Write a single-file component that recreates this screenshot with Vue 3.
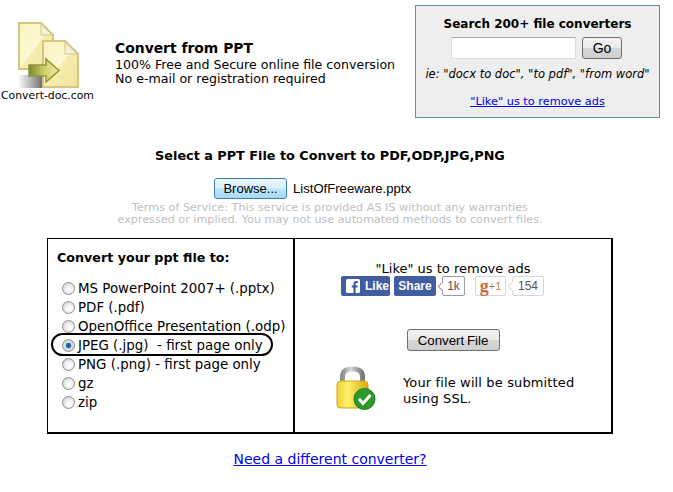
<template>
  <div class="page">
    <div class="top">
      <div class="logo">
        <svg width="62" height="67" viewBox="0 0 62 67">
          <defs>
            <linearGradient id="doc" x1="0" y1="0" x2="1" y2="1">
              <stop offset="0" stop-color="#fbf3bf" />
              <stop offset="0.5" stop-color="#fdf8d2" />
              <stop offset="0.52" stop-color="#f5ecae" />
              <stop offset="1" stop-color="#efe39c" />
            </linearGradient>
            <linearGradient id="shadow" x1="1" y1="0" x2="0" y2="0">
              <stop offset="0" stop-color="#707070" />
              <stop offset="1" stop-color="#ffffff" />
            </linearGradient>
            <linearGradient id="arrow" x1="0" y1="0" x2="1" y2="0">
              <stop offset="0" stop-color="#7c872d" />
              <stop offset="0.5" stop-color="#cdd06a" />
              <stop offset="1" stop-color="#f4eba8" />
            </linearGradient>
          </defs>
          <path d="M0 53 H24 V66 H0 Z" fill="url(#shadow)" />
          <path d="M1 1 H23 L35 13 V47 H1 Z" fill="url(#doc)" stroke="#d4c581" stroke-width="2" />
          <path d="M23 2 V13 H34 Z" fill="#f5f1d6" stroke="#d4c581" />
          <path d="M25 19 H47 L60 32 V65 H25 Z" fill="url(#doc)" stroke="#d4c581" stroke-width="2" />
          <path d="M47 20 V32 H59 Z" fill="#f5f1d6" stroke="#d4c581" />
          <path d="M11 43 H28 V37 L41 48.500 L28 60 V54 H11 Z" fill="url(#arrow)" stroke="#8f9438" stroke-width="1.500" />
        </svg>
        <span>Convert-doc.com</span>
      </div>
      <div class="intro">
        <h1>Convert from PPT</h1>
        <p>100% Free and Secure online file conversion</p>
        <p>No e-mail or registration required</p>
      </div>
      <div class="search">
        <h2>Search 200+ file converters</h2>
        <div class="search-row">
          <input type="text" />
          <button class="btn go" type="button">Go</button>
        </div>
        <p class="hint">ie: "docx to doc", "to pdf", "from word"</p>
        <a class="remove" href="#">"Like" us to remove ads</a>
      </div>
    </div>

    <h2 class="select">Select a PPT File to Convert to PDF,ODP,JPG,PNG</h2>

    <div class="file-row">
      <button class="btn browse" type="button">Browse...</button>
      <span>ListOfFreeware.pptx</span>
    </div>
    <p class="terms">
      Terms of Service: This service is provided AS IS without any warranties<br />
      expressed or implied. You may not use automated methods to convert files.
    </p>

    <div class="panel">
      <div class="left">
        <h3>Convert your ppt file to:</h3>
        <label v-for="opt in options" :key="opt" class="opt">
          <span class="radio" :class="{ on: opt === selected }"></span>
          {{ opt }}
        </label>
        <div class="ring"></div>
      </div>
      <div class="right">
        <div class="like-title">"Like" us to remove ads</div>
        <div class="social">
          <span class="fb like">
            <svg width="14" height="14" viewBox="0 0 14 14">
              <rect width="14" height="14" rx="1.500" fill="#fff" />
              <path d="M9.600 14 V8.600 H11.400 L11.700 6.500 H9.600 V5.200 C9.600 4.500 9.900 4.100 10.700 4.100 H11.800 V2.200 C11.500 2.200 10.900 2.100 10.200 2.100 C8.600 2.100 7.500 3.100 7.500 4.900 V6.500 H5.700 V8.600 H7.500 V14 Z" fill="#3b5998" />
            </svg>
            Like
          </span>
          <span class="fb share">Share</span>
          <span class="count fbc">1k</span>
          <span class="gplus"><b>g</b><i>+1</i></span>
          <span class="count gc">154</span>
        </div>
        <button class="btn convert" type="button">Convert File</button>
        <div class="ssl">
          <svg width="40" height="44" viewBox="0 0 40 44">
            <defs>
              <linearGradient id="shackle" x1="0" y1="0" x2="1" y2="0">
                <stop offset="0" stop-color="#8d8d8d" />
                <stop offset="0.4" stop-color="#d8d8d8" />
                <stop offset="1" stop-color="#777" />
              </linearGradient>
              <linearGradient id="body" x1="0" y1="0" x2="1" y2="0">
                <stop offset="0" stop-color="#f2d335" />
                <stop offset="0.35" stop-color="#fff16a" />
                <stop offset="1" stop-color="#d8a90f" />
              </linearGradient>
            </defs>
            <path d="M6.500 18 V11 C6.500 5 10 3 16.500 3 C23 3 26.500 5 26.500 11 V18" fill="none" stroke="url(#shackle)" stroke-width="5" />
            <rect x="1" y="15" width="31" height="27" rx="4" fill="url(#body)" stroke="#d3a616" />
            <circle cx="28.500" cy="33" r="10.500" fill="#2a9a2a" stroke="#1e7a20" />
            <path d="M23 33 L27 37.500 L34.500 29" fill="none" stroke="#fff" stroke-width="3" />
          </svg>
          <p>Your file will be submitted<br />using SSL.</p>
        </div>
      </div>
    </div>

    <a class="different" href="#">Need a different converter?</a>
  </div>
</template>

<script setup>
const selected = "JPEG (.jpg)\u00a0 - first page only";
const options = [
  "MS PowerPoint 2007+ (.pptx)",
  "PDF (.pdf)",
  "OpenOffice Presentation (.odp)",
  selected,
  "PNG (.png) - first page only",
  "gz",
  "zip",
];
</script>

<style scoped>
.page {
  width: 673px;
  height: 492px;
  overflow: hidden;
  box-sizing: border-box;
  padding-right: 13px;
  background: #fff;
  color: #000;
  font-family: "DejaVu Sans", Verdana, sans-serif;
  font-size: 13px;
  display: flex;
  flex-direction: column;
  align-items: center;
}

.top {
  align-self: stretch;
  display: flex;
  height: 118px;
  flex-shrink: 0;
  padding-top: 5px;
  box-sizing: border-box;
}

.logo {
  width: 115px;
  flex-shrink: 0;
  padding-top: 17px;
  display: flex;
  flex-direction: column;
  font-size: 10.850px;
  line-height: 12px;
  white-space: nowrap;
}

.logo svg {
  margin-left: 18px;
}

.logo span {
  margin-left: 1px;
  margin-top: 1px;
}

.intro {
  width: 300px;
  flex-shrink: 0;
  padding-top: 35px;
  line-height: 14px;
  font-size: 12.600px;
  white-space: nowrap;
}

.intro h1 {
  margin: 0 0 2px;
  font-size: 13.900px;
  line-height: 16px;
}

.intro p {
  margin: 0;
}

.search {
  width: 245px;
  height: 113px;
  flex-shrink: 0;
  box-sizing: border-box;
  border: 1px solid #5f8e9f;
  background: #eeeeee;
  text-align: center;
  padding-top: 10px;
}

.search h2 {
  margin: 0;
  font-size: 12px;
  line-height: 16px;
}

.search-row {
  display: flex;
  justify-content: center;
  gap: 6px;
  margin-top: 5px;
  margin-right: 2px;
}

.search-row input {
  width: 125px;
  height: 22px;
  box-sizing: border-box;
  border: 1px solid #ddd;
  border-top-color: #aaa;
  background: #fff;
  padding: 0;
}

.hint {
  margin: 7px 0 0;
  font-size: 11.500px;
  font-style: italic;
  line-height: 16px;
  white-space: nowrap;
}

.remove {
  display: block;
  margin-top: 13px;
  font-size: 11.300px;
  line-height: 14px;
  color: #0000ee;
}

.btn {
  box-sizing: border-box;
  border: 1px solid #707070;
  border-radius: 3px;
  background: linear-gradient(#f3f3f3 0, #ebebeb 48%, #d6d6d6 52%, #cfcfcf 100%);
  font-family: "Liberation Sans", Arial, sans-serif;
  color: #000;
  padding: 0;
}

.go {
  width: 40px;
  height: 22px;
  font-size: 14px;
}

.select {
  margin: 23px 0 0;
  font-size: 12.800px;
  line-height: 30px;
  height: 30px;
  white-space: nowrap;
}

.file-row {
  display: flex;
  align-items: center;
  gap: 6px;
  margin-top: 7px;
  margin-left: -35px;
  font-family: "Liberation Sans", Arial, sans-serif;
  font-size: 13.100px;
}

.browse {
  width: 73px;
  height: 21px;
  font-size: 13px;
  border-color: #3c7fb1;
  background: linear-gradient(#eaf6fd 0, #d9f0fc 48%, #bee6fd 52%, #a7d9f5 100%);
}

.terms {
  margin: 3px 0 0;
  height: 24px;
  font-size: 11.200px;
  line-height: 12px;
  color: #c0c0c0;
  text-align: center;
  white-space: nowrap;
}

.panel {
  margin-top: 12px;
  width: 566px;
  height: 196px;
  box-sizing: border-box;
  border: 2px solid #000;
  border-top-width: 1px;
  border-left-width: 1px;
  display: flex;
  flex-shrink: 0;
}

.left {
  position: relative;
  width: 247px;
  flex-shrink: 0;
  box-sizing: border-box;
  border-right: 2px solid #000;
  padding: 10px 0 0 9px;
}

.left h3 {
  margin: 0 0 13px;
  font-size: 12.700px;
  line-height: 17px;
}

.opt {
  display: flex;
  align-items: center;
  height: 19px;
  white-space: nowrap;
  font-size: 13.400px;
}

.radio {
  width: 13px;
  height: 13px;
  box-sizing: border-box;
  border-radius: 50%;
  margin: 0 3px 0 5px;
  border: 1px solid #8f8f8f;
  background: radial-gradient(circle at 60% 60%, #fff 0, #f0f0f0 40%, #c4c4c4 100%);
  flex-shrink: 0;
}

.radio.on {
  background: radial-gradient(circle closest-side, #174f96 0, #2c7cc4 48%, #e6e6e6 58%, #d0d0d0 100%);
}

.ring {
  position: absolute;
  left: 3px;
  top: 94px;
  width: 222px;
  height: 23px;
  box-sizing: border-box;
  border: 2px solid #000;
  border-radius: 12px;
}

.right {
  flex: 1;
  display: flex;
  flex-direction: column;
  align-items: center;
  padding-top: 23px;
}

.like-title {
  line-height: 14px;
  font-size: 13px;
  white-space: nowrap;
}

.social {
  display: flex;
  align-items: center;
  height: 20px;
  margin-left: -21px;
  font-family: "Liberation Sans", Arial, sans-serif;
  font-size: 12px;
}

.fb {
  display: flex;
  align-items: center;
  height: 20px;
  background: #3f5da0;
  border-radius: 2px;
  color: #fff;
  font-weight: bold;
  box-sizing: border-box;
}

.like {
  width: 49px;
  gap: 5px;
  padding-left: 5px;
}

.share {
  width: 42px;
  margin-left: 4px;
  justify-content: center;
}

.count {
  position: relative;
  height: 20px;
  box-sizing: border-box;
  border: 1px solid #9a9aa8;
  border-radius: 2px;
  background: #fff;
  color: #555;
  display: flex;
  align-items: center;
  justify-content: center;
}

.fbc {
  width: 23px;
  margin-left: 6px;
}

.count::before {
  content: "";
  position: absolute;
  left: -4px;
  top: 6px;
  width: 6px;
  height: 6px;
  background: #fff;
  border-left: 1px solid #9a9aa8;
  border-bottom: 1px solid #9a9aa8;
  transform: rotate(45deg);
}

.gplus {
  width: 31px;
  height: 20px;
  box-sizing: border-box;
  margin-left: 10px;
  border: 1px solid #d8d8d8;
  border-radius: 2px;
  display: flex;
  align-items: center;
  justify-content: center;
  color: #d4683c;
}

.gplus b {
  font-family: "Liberation Serif", serif;
  font-size: 18px;
}

.gplus i {
  font-style: normal;
  font-size: 11px;
  color: #c07a4a;
}

.gc {
  width: 32px;
  margin-left: 6px;
  border-color: #d8d8d8;
}

.gc::before {
  border-color: #d8d8d8;
}

.convert {
  width: 93px;
  height: 22px;
  margin-top: 33px;
  font-size: 13.300px;
  word-spacing: -1px;
  flex-shrink: 0;
}

.ssl {
  align-self: stretch;
  display: flex;
  align-items: flex-start;
  margin-top: 15px;
  padding-left: 41px;
}

.ssl svg {
  flex-shrink: 0;
}

.ssl p {
  margin: 9px 0 0 27px;
  line-height: 16px;
  letter-spacing: 0.13px;
  white-space: nowrap;
}

.different {
  margin-top: 16px;
  font-size: 14px;
  line-height: 18px;
  color: #0000ee;
  white-space: nowrap;
}
</style>
